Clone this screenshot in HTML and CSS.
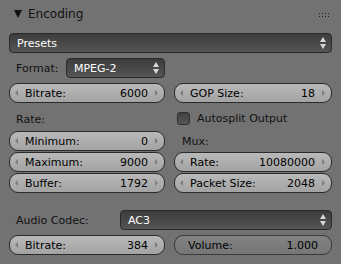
FILE: index.html
```html
<!DOCTYPE html>
<html>
<head>
<meta charset="utf-8">
<link rel="stylesheet" href="styles.css">
</head>
<body>
<div class="panel">
  <div class="header">
    <span class="tri"></span>
    <span class="title">Encoding</span>
    <span class="grip"></span>
  </div>
  <div class="content">
    <div class="menu wide presets"><span>Presets</span><span class="updown"></span></div>

    <div class="cols r-format">
      <div class="col formatrow">
        <span class="label">Format:</span>
        <div class="menu fmt"><span>MPEG-2</span><span class="updown"></span></div>
      </div>
      <div class="col"></div>
    </div>

    <div class="cols r-bitrate">
      <div class="num"><span class="la"></span><span class="nl">Bitrate:</span><span class="nv">6000</span><span class="ra"></span></div>
      <div class="num"><span class="la"></span><span class="nl">GOP Size:</span><span class="nv">18</span><span class="ra"></span></div>
    </div>

    <div class="cols r-labels">
      <div class="col"><span class="label">Rate:</span></div>
      <div class="col"><label class="check"><span class="box"></span><span>Autosplit Output</span></label></div>
    </div>

    <div class="cols r-stack">
      <div class="stack">
        <div class="num"><span class="la"></span><span class="nl">Minimum:</span><span class="nv">0</span><span class="ra"></span></div>
        <div class="num"><span class="la"></span><span class="nl">Maximum:</span><span class="nv">9000</span><span class="ra"></span></div>
        <div class="num"><span class="la"></span><span class="nl">Buffer:</span><span class="nv">1792</span><span class="ra"></span></div>
      </div>
      <div class="stack">
        <div class="labelrow"><span class="label mux">Mux:</span></div>
        <div class="num"><span class="la"></span><span class="nl">Rate:</span><span class="nv">10080000</span><span class="ra"></span></div>
        <div class="num"><span class="la"></span><span class="nl">Packet Size:</span><span class="nv">2048</span><span class="ra"></span></div>
      </div>
    </div>

    <div class="audiorow">
      <span class="label">Audio Codec:</span>
      <div class="menu acodec"><span>AC3</span><span class="updown"></span></div>
    </div>

    <div class="cols r-audio">
      <div class="num"><span class="la"></span><span class="nl">Bitrate:</span><span class="nv">384</span><span class="ra"></span></div>
      <div class="num slider"><span class="nl">Volume:</span><span class="nv">1.000</span></div>
    </div>
  </div>
</div>
</body>
</html>
```

FILE: styles.css
```css
html, body {
  margin: 0;
  padding: 0;
  background: #727272;
}
body {
  width: 341px;
  height: 264px;
  overflow: hidden;
  font-family: "DejaVu Sans", sans-serif;
  font-size: 11px;
  color: #000;
}
.panel {
  width: 341px;
  height: 264px;
  background: #727272;
}
.header {
  height: 27px;
  display: flex;
  align-items: center;
  padding-left: 14px;
  padding-right: 12px;
  box-sizing: border-box;
  position: relative;
}
.tri {
  width: 0;
  height: 0;
  border-left: 4px solid transparent;
  border-right: 4px solid transparent;
  border-top: 8px solid #111;
  margin-right: 6px;
  margin-top: 1px;
}
.title {
  font-size: 12px;
  color: #111;
}
.grip {
  margin-left: auto;
  width: 11px;
  height: 5px;
  background-image: radial-gradient(circle, #1e1e1e 0.7px, transparent 0.9px);
  background-size: 3px 3px;
  background-position: 0 0;
  margin-top: 1px;
}
.content {
  padding: 6px 9px 0 9px;
}
.menu {
  height: 20px;
  box-sizing: border-box;
  border: 1px solid #2a2a2a;
  border-radius: 4px;
  background: linear-gradient(#3c3c3c, #555555);
  color: #fff;
  display: flex;
  align-items: center;
  padding-left: 7px;
  padding-right: 4px;
  position: relative;
}
.menu span:first-child {
  flex: 1;
}
.updown {
  width: 7px;
  height: 12px;
  position: relative;
  flex: none;
}
.updown::before, .updown::after {
  content: "";
  position: absolute;
  left: 0;
  width: 0;
  height: 0;
  border-left: 3.5px solid transparent;
  border-right: 3.5px solid transparent;
}
.updown::before {
  top: 0;
  border-bottom: 5px solid #d8d8d8;
}
.updown::after {
  bottom: 0;
  border-top: 5px solid #d8d8d8;
}
.cols {
  display: grid;
  grid-template-columns: 156px 158px;
  column-gap: 9px;
}
.col {
  display: flex;
  align-items: center;
}
.r-format { margin-top: 5px; height: 20px; }
.formatrow .label { padding-left: 7px; }
.fmt { width: 99px; margin-left: auto; }
.label {
  color: #111;
}
.r-bitrate { margin-top: 5px; }
.r-labels { margin-top: 5px; height: 20px; }
.r-labels .label { padding-left: 7px; padding-top: 3px; }
.check {
  display: flex;
  align-items: center;
  padding-left: 3px;
  color: #111;
}
.box {
  width: 13px;
  height: 13px;
  box-sizing: border-box;
  border: 1px solid #2e2e2e;
  border-radius: 3px;
  background: linear-gradient(#404040, #565656);
  margin-right: 7px;
}
.r-stack { margin-top: 3px; }
.stack {
  display: flex;
  flex-direction: column;
  gap: 1px;
}
.labelrow {
  height: 20px;
  display: flex;
  align-items: center;
}
.mux { padding-left: 8px; }
.num {
  height: 20px;
  box-sizing: border-box;
  border: 1px solid #2b2b2b;
  border-radius: 9px;
  background: linear-gradient(#b9b9b9, #a3a3a3);
  display: flex;
  align-items: center;
  padding: 0 6px 0 5px;
  color: #000;
}
.la, .ra {
  width: 0;
  height: 0;
  border-top: 3px solid transparent;
  border-bottom: 3px solid transparent;
  flex: none;
}
.la { border-right: 3px solid #7d7d7d; margin-right: 7px; }
.ra { border-left: 3px solid #7d7d7d; margin-left: 7px; }
.nl { flex: 1; }
.slider {
  background: linear-gradient(#828282, #767676);
  border-color: #3a3a3a;
  padding: 0 13px 0 13px;
}
.audiorow {
  margin-top: 17px;
  display: flex;
  align-items: center;
  height: 20px;
}
.audiorow .label { padding-left: 7px; }
.acodec { width: 212px; margin-left: auto; }
.r-audio { margin-top: 5px; }
```
